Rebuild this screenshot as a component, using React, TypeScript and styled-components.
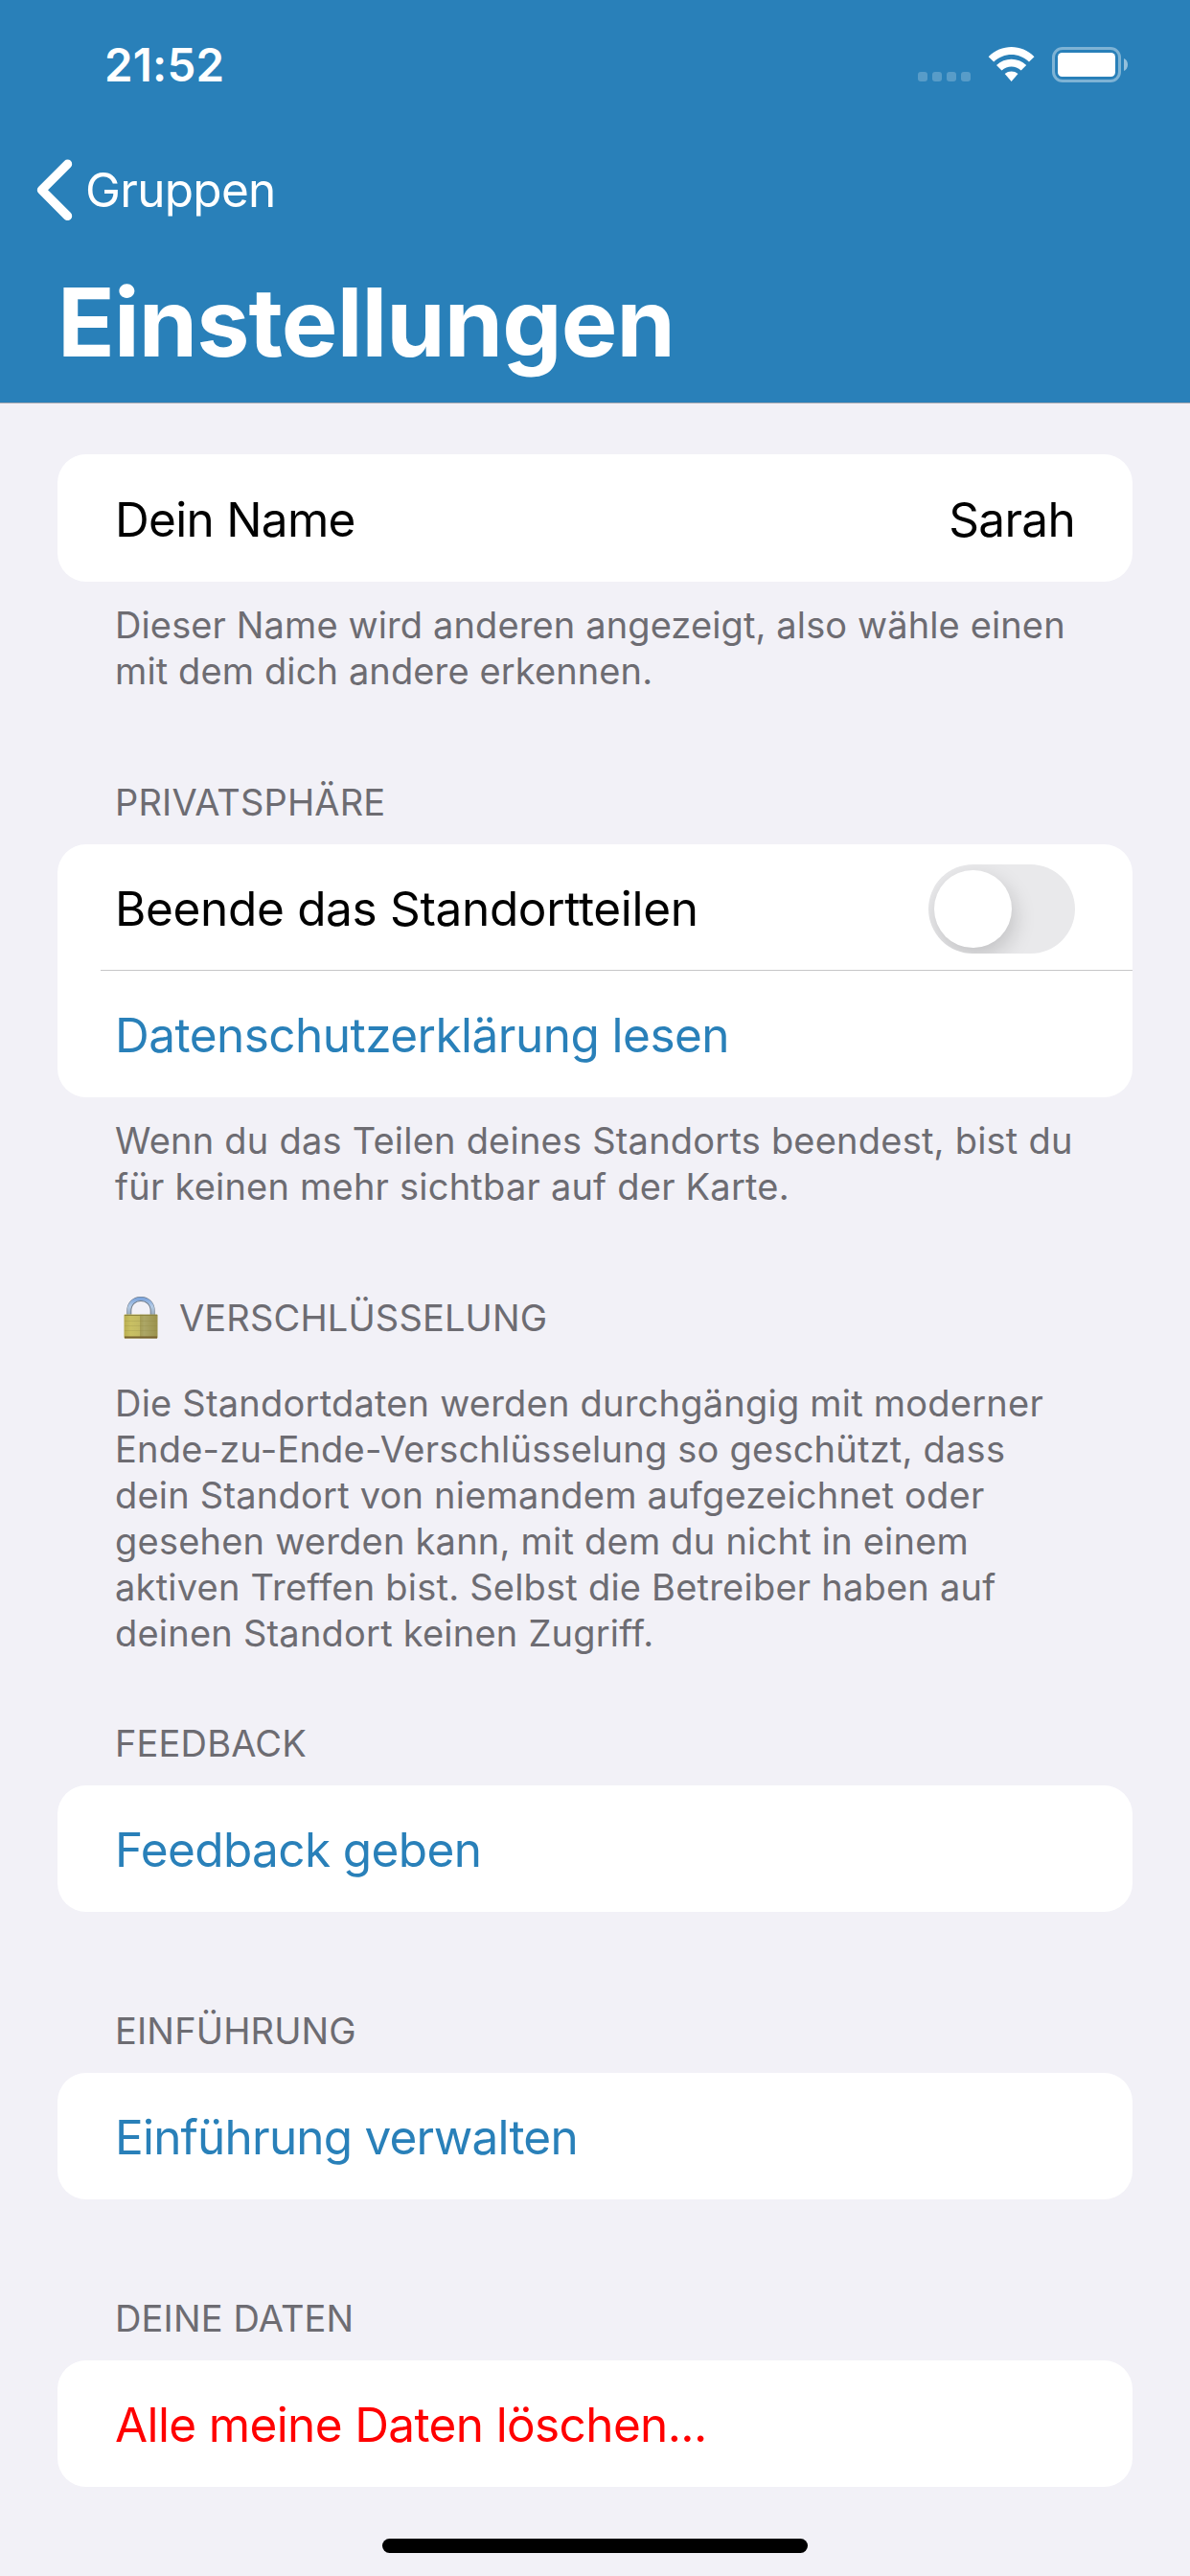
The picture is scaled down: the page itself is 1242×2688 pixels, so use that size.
import React, { useState } from "react";
import styled, { createGlobalStyle } from "styled-components";

const blue = "#2980b9";
const gray = "#6d6c72";

const GlobalStyle = createGlobalStyle`
  * { box-sizing: border-box; }
  body {
    margin: 0;
    background: #f2f1f7;
    font-family: Inter, "Liberation Sans", sans-serif;
    -webkit-font-smoothing: antialiased;
  }
`;

const Screen = styled.div`
  display: flex;
  flex-direction: column;
  width: 1242px;
  height: 2688px;
  background: #f2f1f7;
  overflow: hidden;
`;

const Header = styled.header`
  display: flex;
  flex-direction: column;
  height: 421px;
  color: #fff;
  background: ${blue};
  border-bottom: 1px solid #a9a9b0;
`;

const StatusBar = styled.div`
  display: flex;
  justify-content: space-between;
  height: 132px;
  padding: 38px 65px 0 109px;
`;

const Time = styled.div`
  font-size: 47.5px;
  font-weight: 600;
  line-height: 60px;
  letter-spacing: 0.2px;
`;

const StatusIcons = styled.svg`
  display: block;
  width: 219px;
  height: 37px;
  margin-top: 11px;
`;

const BackButton = styled.button`
  display: flex;
  align-items: center;
  gap: 13px;
  height: 132px;
  padding: 0 0 0 38px;
  border: 0;
  background: none;
  color: inherit;
  font-family: inherit;
  font-size: 49.5px;
  line-height: 60px;
  letter-spacing: -0.7px;
`;

const Chevron = styled.svg`
  display: block;
  width: 38px;
  height: 64px;
`;

const Title = styled.h1`
  margin: 0;
  padding: 12px 0 0 60px;
  font-size: 98.6px;
  font-weight: 700;
  line-height: 120px;
  letter-spacing: -0.9px;
`;

const Content = styled.main`
  display: flex;
  flex-direction: column;
  flex: 1;
  padding: 53px 60px 0;
`;

const Section = styled.section<{ $gap: number }>`
  display: flex;
  flex-direction: column;
  margin-bottom: ${(p) => p.$gap}px;
`;

const Heading = styled.h2`
  display: flex;
  align-items: center;
  height: 48px;
  margin: 0 0 20px;
  padding-left: 60px;
  color: ${gray};
  font-size: 38px;
  font-weight: 400;
  line-height: 48px;
  letter-spacing: 0.15px;
`;

const LockIcon = styled.svg`
  display: block;
  width: 36px;
  height: 44px;
  margin: 0 22px 0 9px;
`;

const Card = styled.div`
  display: flex;
  flex-direction: column;
  border-radius: 30px;
  background: #fff;
`;

const Row = styled.div<{ $color?: string; $tracking?: number; $height?: number }>`
  display: flex;
  align-items: center;
  justify-content: space-between;
  height: ${(p) => p.$height ?? 132}px;
  padding: 2px 60px 0;
  color: ${(p) => p.$color ?? "#000"};
  font-size: 49.5px;
  line-height: 60px;
  letter-spacing: ${(p) => p.$tracking ?? -0.6}px;
`;

const Divider = styled.hr`
  width: 1077px;
  height: 1px;
  margin: -1px 0 0 45px;
  border: 0;
  background: #c6c6c8;
`;

const Footer = styled.p<{ $tracking?: number }>`
  margin: 21px 0 0;
  padding-left: 60px;
  color: ${gray};
  font-size: 38px;
  line-height: 48px;
  letter-spacing: ${(p) => p.$tracking ?? 0.22}px;
  white-space: nowrap;
`;

const Switch = styled.button<{ $on: boolean }>`
  display: flex;
  justify-content: ${(p) => (p.$on ? "flex-end" : "flex-start")};
  width: 153px;
  height: 93px;
  padding: 6px;
  border: 0;
  border-radius: 47px;
  overflow: hidden;
  background: ${(p) => (p.$on ? "#34c759" : "#e9e9eb")};
`;

const Knob = styled.span`
  width: 81px;
  height: 81px;
  border-radius: 50%;
  background: #fff;
  box-shadow: 3px 9px 22px rgba(0, 0, 0, 0.17);
`;

const HomeIndicator = styled.div`
  align-self: center;
  width: 444px;
  height: 15px;
  border-radius: 8px;
  background: #000;
`;

function StatusGlyphs() {
  return (
    <StatusIcons viewBox="0 0 219 37" fill="#fff">
      <g opacity="0.22">
        <rect x="0" y="26" width="10" height="10" rx="3" />
        <rect x="15" y="26" width="10" height="10" rx="3" />
        <rect x="30" y="26" width="10" height="10" rx="3" />
        <rect x="45" y="26" width="10" height="10" rx="3" />
      </g>
      <path d="M73.7 10.2C87 -3.4 108.300 -3.4 121.500 10.2L116 15.6C105.500 5.4 89.700 5.4 79.200 15.600Z" />
      <path d="M82 18.900C90.900 10.7 104.300 10.7 113.200 18.900L107.700 24.400C101.700 19.200 93.500 19.200 87.500 24.400Z" />
      <path d="M90.700 28C94.700 24.700 100.500 24.700 104.500 28L97.600 36Z" />
      <rect x="141.500" y="1.500" width="69" height="34" rx="9.500" fill="none" stroke="#fff" strokeWidth="3" opacity="0.4" />
      <rect x="146" y="6" width="60" height="25" rx="4.500" />
      <path d="M215 12C217.600 13 219 15.600 219 18.500C219 21.400 217.600 24 215 25Z" opacity="0.5" />
    </StatusIcons>
  );
}

function Lock() {
  return (
    <LockIcon viewBox="0 0 36 44">
      <defs>
        <linearGradient id="body" x1="0" x2="1" y1="0" y2="0">
          <stop offset="0" stopColor="#b9ad4e" />
          <stop offset="0.2" stopColor="#c9c063" />
          <stop offset="0.46" stopColor="#c2b962" />
          <stop offset="0.48" stopColor="#a59d55" />
          <stop offset="0.6" stopColor="#aca666" />
          <stop offset="1" stopColor="#9a914b" />
        </linearGradient>
        <linearGradient id="shackle" x1="0" x2="0" y1="0" y2="1">
          <stop offset="0" stopColor="#7fa6dc" />
          <stop offset="0.45" stopColor="#b4cbe6" />
          <stop offset="1" stopColor="#97a7b6" />
        </linearGradient>
      </defs>
      <path d="M5.800 20V15C5.800 -1.700 30.200 -1.700 30.200 15V20" fill="none" stroke="#6d7885" strokeWidth="5" />
      <path d="M5.600 20V15C5.600 -2 30.400 -2 30.400 15V20" fill="none" stroke="url(#shackle)" strokeWidth="3.600" />
      <rect x="0.500" y="18.500" width="35" height="25" rx="1" fill="url(#body)" />
      <path d="M1 19.500H35" stroke="#8d8541" strokeWidth="1" />
      <path d="M1 25.500H35M1 30.500H35M1 35.500H35" stroke="#8a823e" strokeWidth="0.600" opacity="0.350" />
      <path d="M1 42.500H35" stroke="#77612d" strokeWidth="2" />
    </LockIcon>
  );
}

export default function App() {
  const [stopped, setStopped] = useState(false);
  return (
    <Screen>
      <GlobalStyle />
      <Header>
        <StatusBar>
          <Time>21:52</Time>
          <StatusGlyphs />
        </StatusBar>
        <BackButton>
          <Chevron viewBox="0 0 38 64" fill="none" stroke="#fff" strokeWidth="9.400" strokeLinecap="round" strokeLinejoin="round">
            <path d="M32.500 5.200L5.500 32.300L32.500 59.400" />
          </Chevron>
          Gruppen
        </BackButton>
        <Title>Einstellungen</Title>
      </Header>
      <Content>
        <Section $gap={89}>
          <Card>
            <Row $height={133} $tracking={-0.7}>
              <span>Dein Name</span>
              <span>Sarah</span>
            </Row>
          </Card>
          <Footer $tracking={0.12}>
            Dieser Name wird anderen angezeigt, also wähle einen
            <br />
            mit dem dich andere erkennen.
          </Footer>
        </Section>
        <Section $gap={89}>
          <Heading>PRIVATSPHÄRE</Heading>
          <Card>
            <Row $tracking={-0.33}>
              <span>Beende das Standortteilen</span>
              <Switch $on={stopped} role="switch" aria-checked={stopped} onClick={() => setStopped(!stopped)}>
                <Knob />
              </Switch>
            </Row>
            <Divider />
            <Row $color={blue} $tracking={-0.53}>Datenschutzerklärung lesen</Row>
          </Card>
          <Footer>
            Wenn du das Teilen deines Standorts beendest, bist du
            <br />
            für keinen mehr sichtbar auf der Karte.
          </Footer>
        </Section>
        <Section $gap={67}>
          <Heading>
            <Lock />
            VERSCHLÜSSELUNG
          </Heading>
          <Footer>
            Die Standortdaten werden durchgängig mit moderner
            <br />
            Ende-zu-Ende-Verschlüsselung so geschützt, dass
            <br />
            dein Standort von niemandem aufgezeichnet oder
            <br />
            gesehen werden kann, mit dem du nicht in einem
            <br />
            aktiven Treffen bist. Selbst die Betreiber haben auf
            <br />
            deinen Standort keinen Zugriff.
          </Footer>
        </Section>
        <Section $gap={100}>
          <Heading>FEEDBACK</Heading>
          <Card>
            <Row $color={blue}>Feedback geben</Row>
          </Card>
        </Section>
        <Section $gap={100}>
          <Heading>EINFÜHRUNG</Heading>
          <Card>
            <Row $color={blue} $tracking={-0.8}>Einführung verwalten</Row>
          </Card>
        </Section>
        <Section $gap={54}>
          <Heading>DEINE DATEN</Heading>
          <Card>
            <Row $color="#ff0000" $tracking={-0.63}>Alle meine Daten löschen...</Row>
          </Card>
        </Section>
        <HomeIndicator />
      </Content>
    </Screen>
  );
}
